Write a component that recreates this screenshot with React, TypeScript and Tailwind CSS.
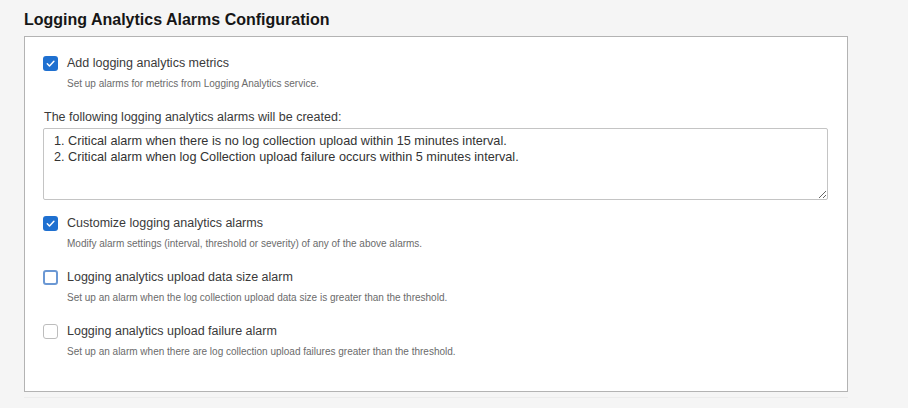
import { useState } from "react";

type Option = {
  id: string;
  label: string;
  help: string;
  checked: boolean;
  focused?: boolean;
};

const Checkbox = ({ checked, focused }: { checked: boolean; focused?: boolean }) => {
  if (checked) {
    return (
      <span className="flex h-[15px] w-[15px] shrink-0 items-center justify-center rounded-[3px] bg-[#1f70d0]">
        <svg width="11" height="11" viewBox="0 0 12 12" fill="none">
          <path d="M2.5 6.3l2.4 2.4 4.8-5.2" stroke="white" strokeWidth="1.6" strokeLinecap="round" strokeLinejoin="round" />
        </svg>
      </span>
    );
  }
  return (
    <span
      className={
        focused
          ? "block h-[15px] w-[15px] shrink-0 rounded-[3px] border-2 border-[#6b98d4] bg-white"
          : "block h-[15px] w-[15px] shrink-0 rounded-[3px] border border-[#bdbdbd] bg-white"
      }
    />
  );
};

const OptionRow = ({ option }: { option: Option }) => (
  <div>
    <div className="flex h-4 items-center gap-[9px]">
      <Checkbox checked={option.checked} focused={option.focused} />
      <span className="text-[12.5px] leading-4 text-[#3a3a3a]">{option.label}</span>
    </div>
    <p className="mt-[6px] pl-[24px] text-[10px] leading-[14px] text-[#6b6b6b]">{option.help}</p>
  </div>
);

export default function App() {
  const [alarms] = useState(
    "1. Critical alarm when there is no log collection upload within 15 minutes interval.\n2. Critical alarm when log Collection upload failure occurs within 5 minutes interval."
  );

  const options: Option[] = [
    {
      id: "customize",
      label: "Customize logging analytics alarms",
      help: "Modify alarm settings (interval, threshold or severity) of any of the above alarms.",
      checked: true,
    },
    {
      id: "size",
      label: "Logging analytics upload data size alarm",
      help: "Set up an alarm when the log collection upload data size is greater than the threshold.",
      checked: false,
      focused: true,
    },
    {
      id: "failure",
      label: "Logging analytics upload failure alarm",
      help: "Set up an alarm when there are log collection upload failures greater than the threshold.",
      checked: false,
    },
  ];

  return (
    <div className="h-[408px] w-[908px] bg-[#f5f5f5] px-[24px] pt-[10px] font-['Liberation_Sans',Arial,sans-serif]">
      <h2 className="text-[16px] font-bold leading-5 text-[#161616]">Logging Analytics Alarms Configuration</h2>

      <div className="mt-[6px] h-[356px] w-[824px] border border-[#b3b3b3] bg-white pl-[18px] pr-[19px] pt-[18px]">
        <OptionRow
          option={{
            id: "metrics",
            label: "Add logging analytics metrics",
            help: "Set up alarms for metrics from Logging Analytics service.",
            checked: true,
          }}
        />

        <p className="mt-[18px] pl-px text-[12.5px] leading-4 text-[#3a3a3a]">
          The following logging analytics alarms will be created:
        </p>
        <textarea
          readOnly
          value={alarms}
          className="mt-[3px] block h-[72px] w-full rounded-[2px] border border-[#c4c4c4] px-[10px] pt-[4px] text-[12.7px] leading-4 text-[#333] outline-none"
        />

        <div className="mt-[15px] flex flex-col gap-[18px]">
          {options.map((o) => (
            <OptionRow key={o.id} option={o} />
          ))}
        </div>
      </div>
      <div className="mt-[5px] h-px w-[824px] bg-[#ececec]" />
    </div>
  );
}
